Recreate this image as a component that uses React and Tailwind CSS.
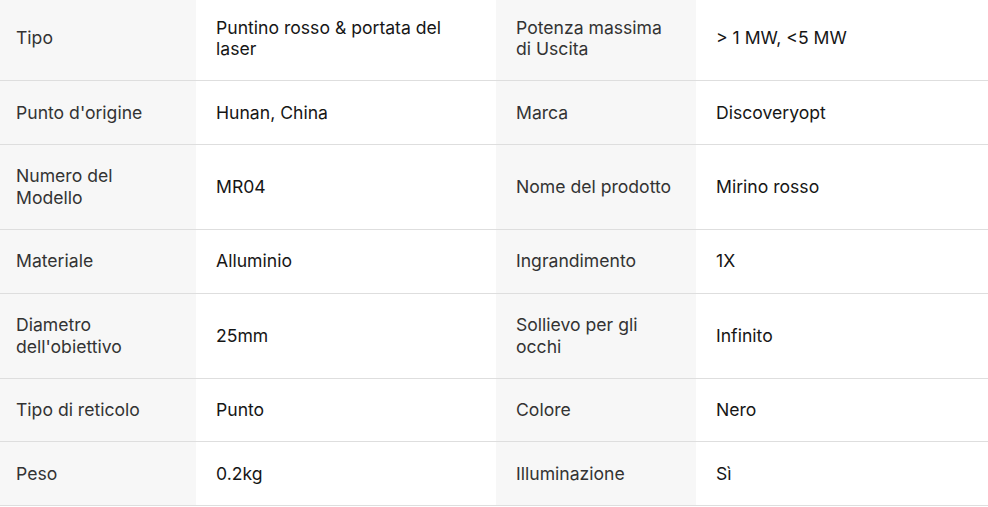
import React from 'react';

const rows = [
  ['Tipo', 'Puntino rosso & portata del laser', 'Potenza massima di Uscita', '> 1 MW, <5 MW'],
  ["Punto d'origine", 'Hunan, China', 'Marca', 'Discoveryopt'],
  ['Numero del Modello', 'MR04', 'Nome del prodotto', 'Mirino rosso'],
  ['Materiale', 'Alluminio', 'Ingrandimento', '1X'],
  ["Diametro dell'obiettivo", '25mm', 'Sollievo per gli occhi', 'Infinito'],
  ['Tipo di reticolo', 'Punto', 'Colore', 'Nero'],
  ['Peso', '0.2kg', 'Illuminazione', 'Sì'],
];

const App = () => {
  return (
    <div className="w-[988px] h-[507px] overflow-hidden bg-white" style={{ fontFamily: 'Inter, "Noto Sans", sans-serif' }}>
      <table className="w-[988px] table-fixed border-collapse mt-[-4px] text-[17.6px] leading-[21.6px]">
        <colgroup>
          <col className="w-[196px]" />
          <col className="w-[300px]" />
          <col className="w-[200px]" />
          <col className="w-[292px]" />
        </colgroup>
        <tbody>
          {rows.map((r, i) => (
            <tr key={i} className="border-b border-[#dedede]">
              <td className="bg-[#f7f7f7] pl-4 pr-5 py-[20.5px] align-middle text-[#333]">{r[0]}</td>
              <td className="bg-white px-5 py-[20.5px] align-middle text-[#161616]">{r[1]}</td>
              <td className="bg-[#f7f7f7] px-5 py-[20.5px] align-middle text-[#333]">{r[2]}</td>
              <td className="bg-white px-5 py-[20.5px] align-middle text-[#161616]">{r[3]}</td>
            </tr>
          ))}
        </tbody>
      </table>
    </div>
  );
};

export default App;
